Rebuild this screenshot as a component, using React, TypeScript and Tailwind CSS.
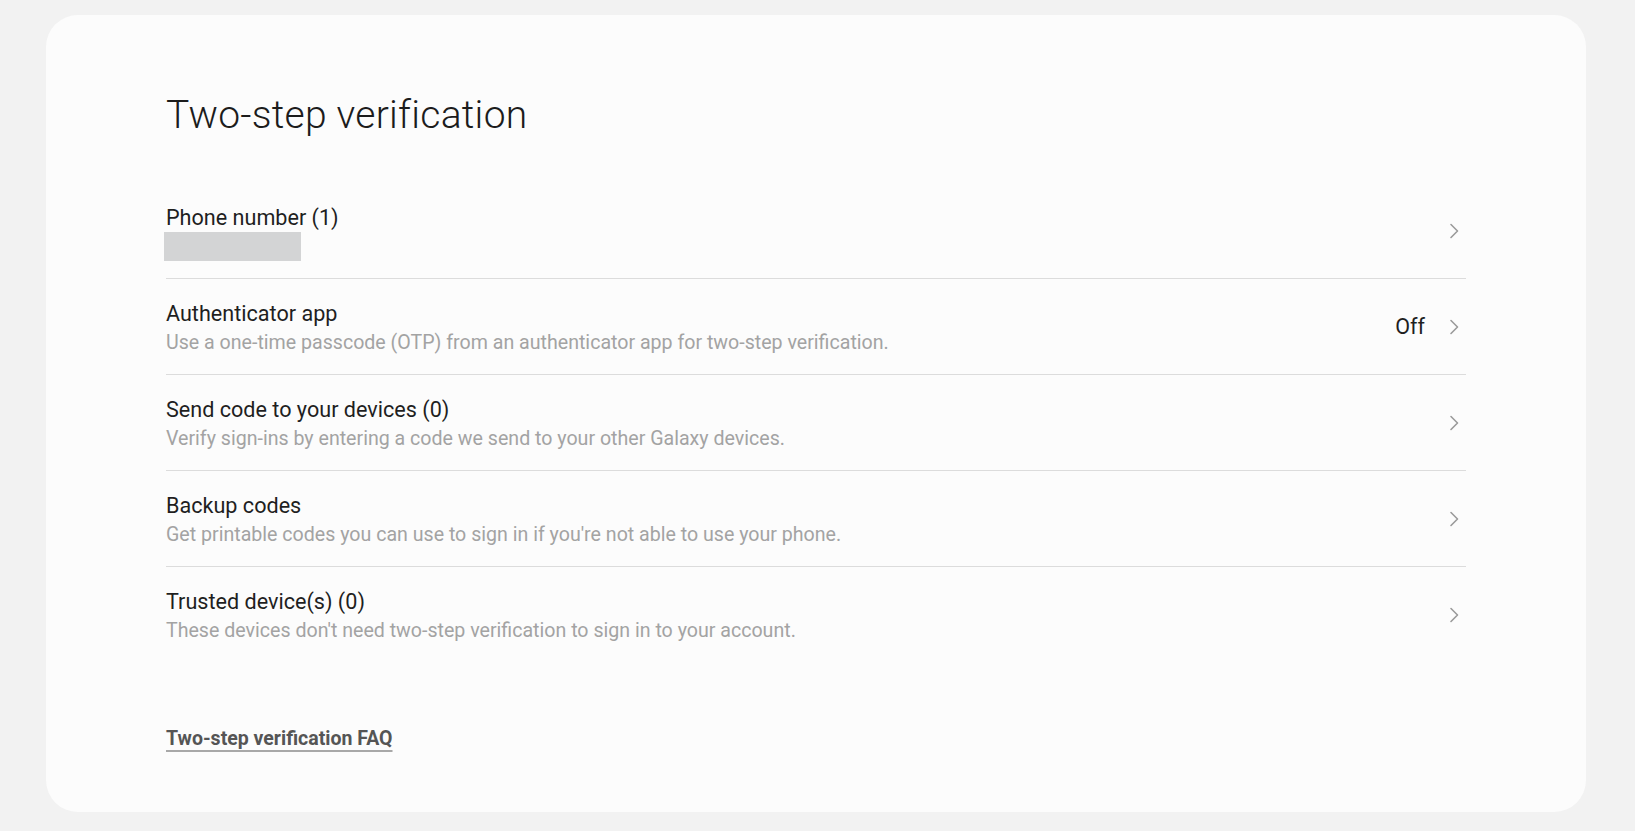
import React from "react";

function Chevron() {
  return (
    <svg width="10" height="16" viewBox="0 0 10 16" fill="none" className="shrink-0">
      <path d="M2 1.5 L8.5 8 L2 14.5" stroke="#9b9b9b" strokeWidth="1.6" strokeLinecap="round" strokeLinejoin="round" />
    </svg>
  );
}

type RowProps = {
  title: string;
  desc?: string;
  status?: string;
  masked?: boolean;
  last?: boolean;
};

function Row({ title, desc, status, masked, last }: RowProps) {
  return (
    <div
      className={`flex h-[96px] items-center justify-between pr-[7px] ${
        last ? "" : "border-b border-[#dcdcdc]"
      }`}
    >
      <div className="flex flex-col pt-[3px]">
        <div className="text-[21.6px] leading-[28px] text-[#1f1f1f]">{title}</div>
        {masked ? (
          <div className="h-[29px] w-[137px] bg-[#d3d4d5] -ml-[2px]" />
        ) : (
          <div className="text-[19.6px] leading-[29px] text-[#a3a3a3]">{desc}</div>
        )}
      </div>
      <div className="flex items-center gap-[24px]">
        {status && <span className="text-[21.5px] leading-[28px] text-[#1f1f1f]">{status}</span>}
        <Chevron />
      </div>
    </div>
  );
}

export default function App() {
  return (
    <div
      className="min-h-[831px] w-full bg-[#f2f2f2] pt-[15px]"
      style={{ fontFamily: "Roboto, 'Noto Sans', sans-serif" }}
    >
      <div className="ml-[46px] w-[1540px] rounded-[32px] bg-[#fcfcfc] pl-[120px] pr-[120px] pt-[76px] pb-[60px]">
        <h1 className="text-[39px] font-light leading-[48px] text-[#1c1c1c] tracking-[0.25px]">
          Two-step verification
        </h1>
        <div className="mt-[44px] flex flex-col">
          <Row title="Phone number (1)" masked />
          <Row
            title="Authenticator app"
            desc="Use a one-time passcode (OTP) from an authenticator app for two-step verification."
            status="Off"
          />
          <Row
            title="Send code to your devices (0)"
            desc="Verify sign-ins by entering a code we send to your other Galaxy devices."
          />
          <Row
            title="Backup codes"
            desc="Get printable codes you can use to sign in if you're not able to use your phone."
          />
          <Row
            title="Trusted device(s) (0)"
            desc="These devices don't need two-step verification to sign in to your account."
            last
          />
        </div>
        <div className="mt-[64px]">
          <a
            href="#"
            className="text-[19.5px] font-bold leading-[24px] text-[#555555] underline decoration-[#a8a8a8] decoration-2 underline-offset-[5px]"
          >
            Two-step verification FAQ
          </a>
        </div>
      </div>
    </div>
  );
}
